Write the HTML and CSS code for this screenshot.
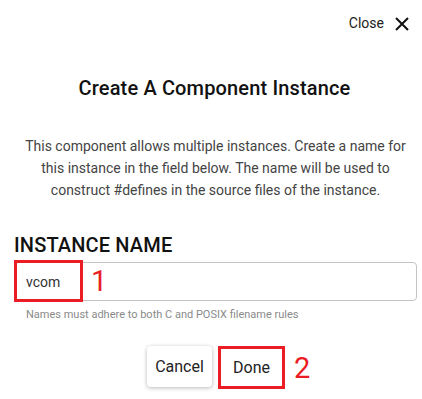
FILE: index.html
```html
<!DOCTYPE html>
<html lang="en">
<head>
  <meta charset="UTF-8" />
  <title>Create A Component Instance</title>
  <meta name="viewport" content="width=device-width, initial-scale=1.0" />
  <link rel="stylesheet" href="styles.css">
</head>
<body>

<div class="dialog">
  <header class="dialog-head">
    <button class="close-btn">
      <span>Close</span>
      <svg width="14" height="14" viewBox="0 0 14 14" aria-hidden="true">
        <path d="M1 1 L13 13 M13 1 L1 13" stroke="#111" stroke-width="2" fill="none" />
      </svg>
    </button>
  </header>

  <h2 class="title">Create A Component Instance</h2>

  <p class="desc">This component allows multiple instances. Create a name for<br>this instance in the field below. The name will be used to<br>construct #defines in the source files of the instance.</p>

  <label class="field-label" for="instance-name">Instance Name</label>
  <div class="field">
    <input id="instance-name" type="text" value="vcom" />
    <span class="mark-box"></span>
    <span class="mark-num num-1">1</span>
  </div>
  <div class="hint">Names must adhere to both C and POSIX filename rules</div>

  <div class="actions">
    <button class="btn">Cancel</button>
    <div class="done-wrap">
      <button class="btn btn-done">Done</button>
      <span class="mark-num num-2">2</span>
    </div>
  </div>
</div>

</body>
</html>
```

FILE: styles.css
```css
* { box-sizing: border-box; }
body {
  margin: 0;
  font-family: Roboto, 'Noto Sans', sans-serif;
  background: #fff;
  color: #1a1a1a;
}

.dialog {
  width: 422px;
  height: 399px;
  padding: 0 5px 0 14px;
}

.dialog-head {
  display: flex;
  justify-content: flex-end;
  padding-top: 14px;
  padding-right: 8px;
}

.close-btn {
  display: flex;
  align-items: center;
  gap: 11px;
  padding: 0;
  border: none;
  background: none;
  font-family: inherit;
  font-size: 14px;
  line-height: 18px;
  color: #222;
  cursor: pointer;
}

.close-btn svg { margin-top: 1px; }

.title {
  margin: 44px 0 0;
  padding-right: 2px;
  text-align: center;
  font-size: 20px;
  font-weight: 500;
  letter-spacing: 0.15px;
  line-height: 24px;
  color: #111;
}

.desc {
  margin: 35px 0 0;
  text-align: center;
  white-space: nowrap;
  font-size: 14px;
  line-height: 22px;
  color: #444;
}

.field-label {
  display: block;
  margin-top: 33px;
  font-size: 20px;
  font-weight: 500;
  letter-spacing: 0.15px;
  line-height: 22px;
  text-transform: uppercase;
  color: #111;
}

.field {
  position: relative;
  margin-top: 6px;
}

.field input {
  display: block;
  width: 403px;
  height: 39px;
  padding: 0 11px;
  border: 1px solid #c4c4c4;
  border-radius: 4px;
  font-family: inherit;
  font-size: 14px;
  color: #333;
  outline: none;
}

.mark-box {
  position: absolute;
  left: 0;
  top: -2px;
  width: 69px;
  height: 42px;
  border: 3px solid #ea1d25;
}

.mark-num {
  position: absolute;
  font-size: 29px;
  line-height: 1;
  color: #ea1d25;
}

.num-1 {
  left: 77px;
  top: 5px;
}

.hint {
  margin-top: 7px;
  padding-left: 12px;
  font-size: 11px;
  line-height: 14px;
  color: #8a8a8a;
}

.actions {
  display: flex;
  justify-content: center;
  gap: 6px;
  margin-top: 24px;
  padding-left: 1px;
}

.btn {
  width: 65px;
  height: 41px;
  border: none;
  border-radius: 4px;
  background: #fff;
  box-shadow: 0 1px 4px rgba(0, 0, 0, 0.28);
  font-family: inherit;
  font-size: 16px;
  color: #222;
  cursor: pointer;
}

.done-wrap { position: relative; }

.btn-done {
  width: 67px;
  height: 43px;
  border: 3px solid #ea1d25;
  border-radius: 0;
  box-shadow: none;
}

.num-2 {
  left: 76px;
  top: 8px;
}
```
